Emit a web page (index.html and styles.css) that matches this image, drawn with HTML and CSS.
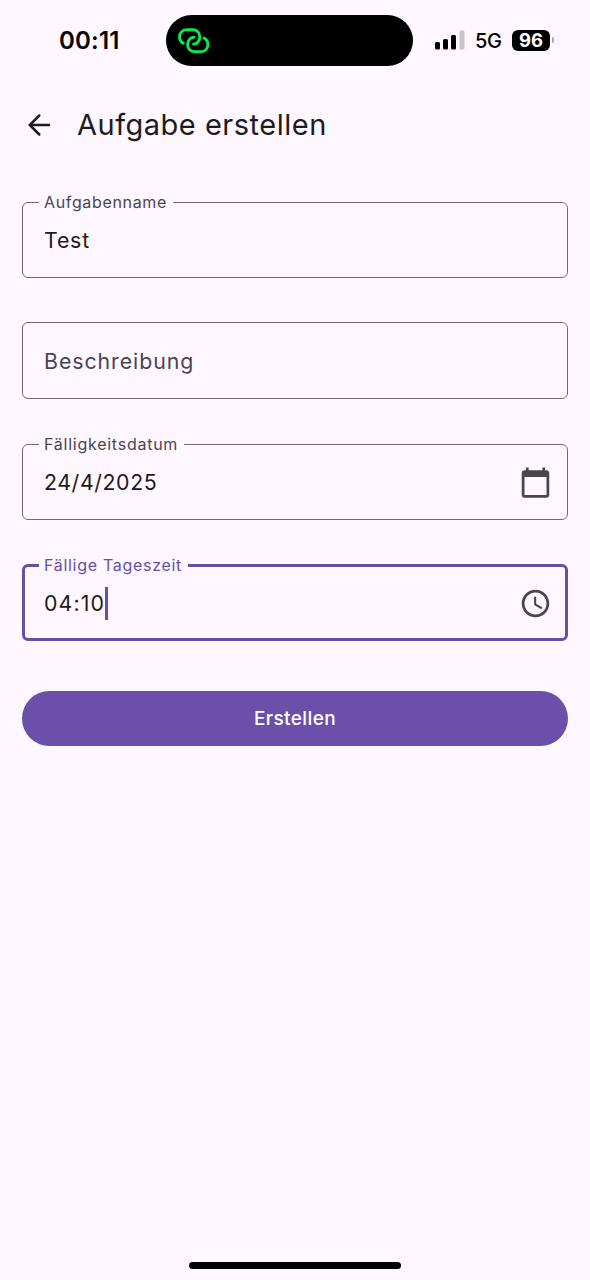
FILE: index.html
```html
<!DOCTYPE html>
<html lang="de">
<head>
<meta charset="utf-8">
<title>Aufgabe erstellen</title>
<link rel="stylesheet" href="styles.css">
</head>
<body>
<div class="screen">
  <header class="status">
    <div class="time">00:11</div>
    <div class="island">
      <svg class="link" width="34" height="28" viewBox="0 0 34 28" fill="none" stroke="#0bea53" stroke-width="2.900" stroke-linecap="round">
        <path d="M6.300 16.300C4 15 2.500 12.800 2.500 10 2.500 5.700 5.700 2.700 10 2.700h5.500c4.500 0 7.300 3.100 7.300 7.100 0 4.200-2.700 7.300-6.300 7.300"/>
        <path d="M27.100 11.100c2.300 1.300 3.800 3.500 3.800 6.300 0 4.300-3.200 7.300-7.500 7.300h-5.500c-4.500 0-7.300-3.100-7.300-7.100 0-4.200 2.700-7.300 6.300-7.300"/>
      </svg>
    </div>
    <div class="indicators">
      <svg class="signal" width="30" height="20" viewBox="0 0 30 20">
        <rect x="0" y="12" width="5" height="7.500" rx="1.500"/>
        <rect x="8" y="9" width="5" height="10.500" rx="1.500"/>
        <rect x="16" y="5" width="5" height="14.500" rx="1.500"/>
        <rect x="24.500" y="0.500" width="5" height="19" rx="1.500" fill="#c9c3cb"/>
      </svg>
      <span class="network">5G</span>
      <span class="battery">96</span>
      <span class="battery-tip"></span>
    </div>
  </header>

  <div class="appbar">
    <svg class="back" width="24" height="24" viewBox="0 0 24 24" fill="none" stroke="#1d1b20" stroke-width="2.500" stroke-linecap="round">
      <path d="M22 12H3M12.300 2.500L2.800 12l9.500 9.500"/>
    </svg>
    <h1 class="title">Aufgabe erstellen</h1>
  </div>

  <main class="form">
    <fieldset class="field">
      <legend class="label label-name">Aufgabenname</legend>
      <div class="row"><span class="value value-name">Test</span></div>
    </fieldset>
    <div class="field field-empty">
      <div class="row"><span class="value hint">Beschreibung</span></div>
    </div>
    <fieldset class="field">
      <legend class="label label-date">Fälligkeitsdatum</legend>
      <div class="row">
        <span class="value value-date">24/4/2025</span>
        <svg class="icon" width="33" height="33" viewBox="0 0 24 24" fill="#49454f">
          <path d="M20 3h-1V1h-2v2H7V1H5v2H4c-1.100 0-2 .9-2 2v16c0 1.100.9 2 2 2h16c1.100 0 2-.9 2-2V5c0-1.100-.9-2-2-2zm0 18H4V8h16v13z"/>
        </svg>
      </div>
    </fieldset>
    <fieldset class="field field-focus">
      <legend class="label label-time">Fällige Tageszeit</legend>
      <div class="row">
        <span class="value value-time">04:10</span><span class="caret"></span>
        <svg class="icon" width="33" height="33" viewBox="0 0 24 24" fill="#49454f">
          <path d="M11.990 2C6.470 2 2 6.480 2 12s4.470 10 9.990 10C17.520 22 22 17.520 22 12S17.520 2 11.990 2zM12 20c-4.420 0-8-3.580-8-8s3.580-8 8-8 8 3.580 8 8-3.580 8-8 8zM12.500 7H11v6l5.250 3.150.75-1.230-4.500-2.670z"/>
        </svg>
      </div>
    </fieldset>
    <button class="submit" type="button">Erstellen</button>
  </main>
  <div class="home"></div>
</div>
</body>
</html>
```
FILE: styles.css
```css
* { box-sizing: border-box; }
body {
  margin: 0;
  background: #fef7ff;
  color: #1d1b20;
  font-family: Inter, "Liberation Sans", sans-serif;
}
.screen {
  width: 590px;
  height: 1280px;
  display: flex;
  flex-direction: column;
  overflow: hidden;
}
.status {
  display: flex;
  height: 66px;
  padding-top: 15px;
  color: #000;
}
.time {
  width: 166px;
  padding-left: 59px;
  font-size: 24px;
  font-weight: 600;
  line-height: 51px;
  letter-spacing: 0.2px;
}
.island {
  width: 247px;
  height: 51px;
  padding: 12px 0 0 11px;
  border-radius: 26px;
  background: #000;
}
.link { display: block; }
.indicators {
  display: flex;
  align-items: center;
  height: 50px;
  padding-left: 22px;
}
.network {
  width: 37px;
  padding: 2px 0 0 10px;
  font-size: 20px;
  font-weight: 500;
  letter-spacing: -0.4px;
  white-space: nowrap;
}
.battery {
  width: 38px;
  height: 21px;
  margin-left: 10px;
  border-radius: 6px;
  background: #000;
  color: #fff;
  font-size: 18.5px;
  font-weight: 700;
  line-height: 21px;
  text-align: center;
}
.battery-tip {
  width: 2px;
  height: 6px;
  margin-left: 2px;
  border-radius: 0 2px 2px 0;
  background: #aaa5ad;
}
.appbar {
  display: flex;
  align-items: center;
  height: 76px;
  margin-top: 21px;
  padding-left: 27px;
}
.title {
  margin: 0 0 0 26px;
  font-size: 29px;
  font-weight: 400;
  line-height: 40px;
  letter-spacing: 0.5px;
}
.form {
  display: flex;
  flex-direction: column;
  gap: 35px;
  padding: 29px 22px 0;
}
.field {
  min-width: 0;
  height: 86px;
  margin: 0;
  padding: 0 16px;
  border: 1px solid #6f6a74;
  border-radius: 6px;
}
.field-empty {
  height: 77px;
  margin-top: 9px;
}
.label {
  height: 20px;
  padding: 0 6px 0 5px;
  color: #49454f;
  font-size: 16px;
  line-height: 20px;
  white-space: nowrap;
}
.label-name { letter-spacing: 0.65px; }
.label-date { letter-spacing: 0.75px; }
.label-time { letter-spacing: 0.7px; }
.row {
  display: flex;
  align-items: center;
  height: 56px;
  padding-left: 5px;
}
.field-empty .row { height: 75px; }
.value {
  font-size: 21.3px;
  line-height: 30px;
  letter-spacing: 0.6px;
}
.value-name { letter-spacing: 0.8px; }
.value-time { letter-spacing: 1.1px; }
.hint {
  color: #49454f;
  letter-spacing: 0.95px;
}
.icon {
  margin: 0 -1px 0 auto;
}
.field-focus {
  padding: 0 14px;
  border: 3px solid #6750a4;
}
.field-focus .label { color: #6750a4; }
.caret {
  width: 3px;
  height: 33px;
  background: #6750a4;
}
.submit {
  height: 55px;
  margin-top: 15px;
  border: 0;
  border-radius: 28px;
  background: #6b4fa8;
  color: #fff;
  font: 500 19px/53px Inter, "Liberation Sans", sans-serif;
  letter-spacing: 0.4px;
}
.home {
  width: 212px;
  height: 7px;
  margin: auto auto 11px 189px;
  border-radius: 4px;
  background: #000;
}
```
